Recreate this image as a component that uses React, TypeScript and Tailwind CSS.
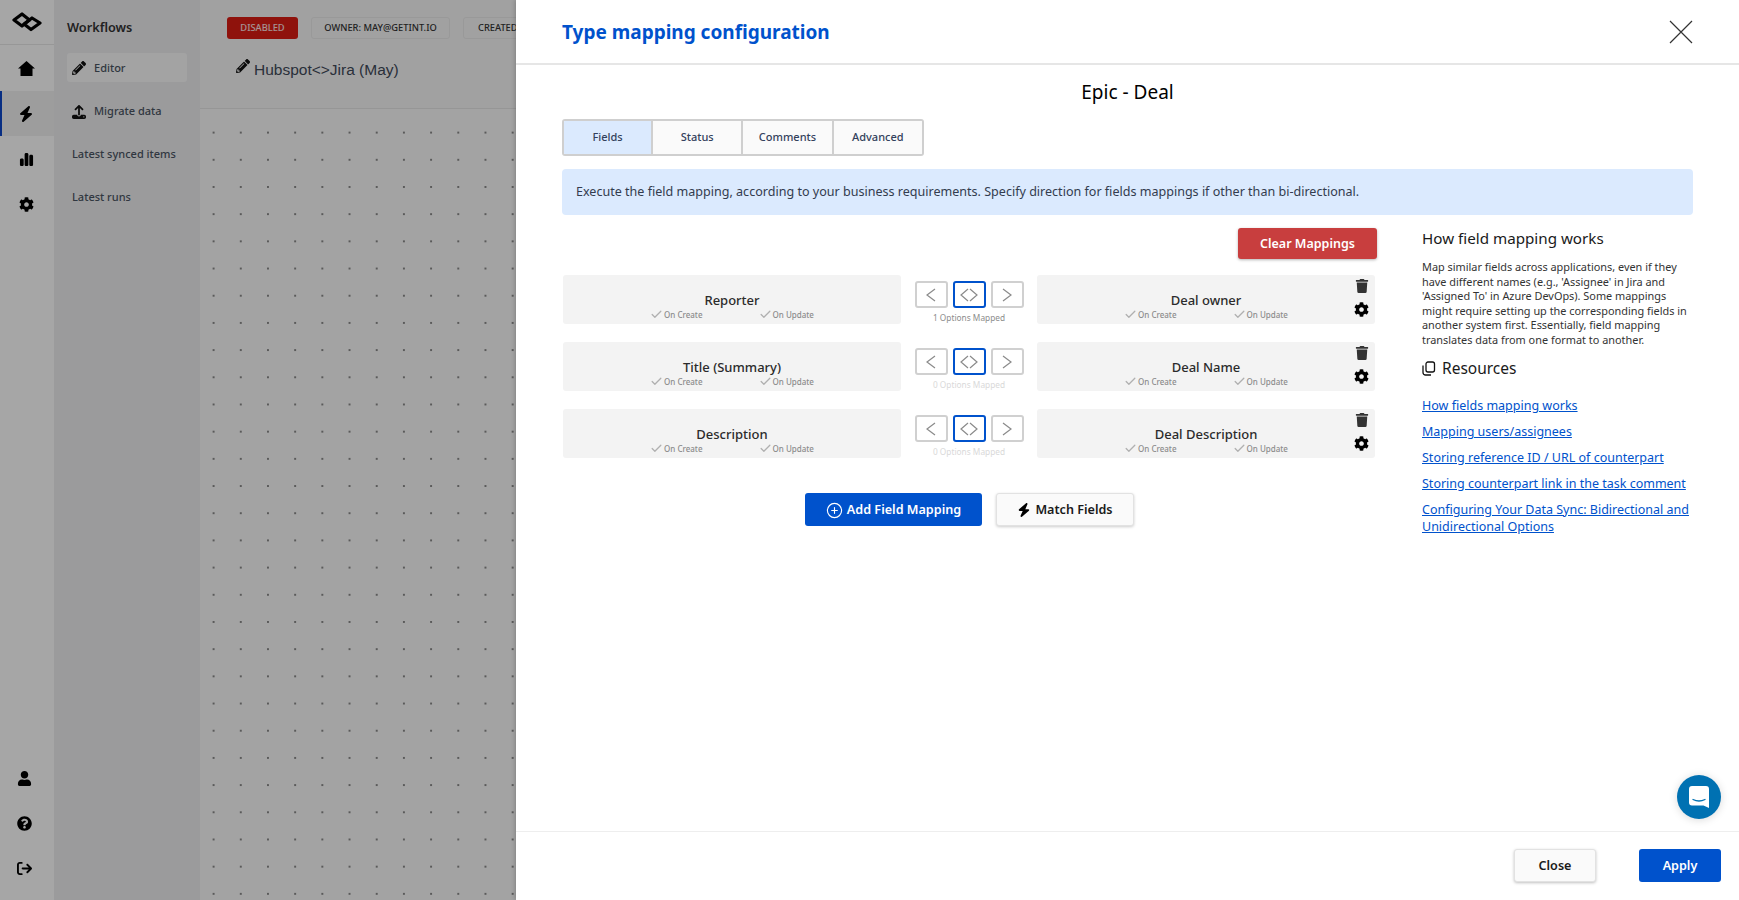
import { FaCog, FaUser, FaQuestionCircle, FaTrash, FaPencilAlt } from 'react-icons/fa';
import { FaBolt, FaChartSimple, FaArrowRightFromBracket, FaUpload } from 'react-icons/fa6';
import { Check, CirclePlus } from 'lucide-react';

const fieldRows = [
  { left: 'Reporter', right: 'Deal owner', options: '1 Options Mapped', muted: false },
  { left: 'Title (Summary)', right: 'Deal Name', options: '0 Options Mapped', muted: true },
  { left: 'Description', right: 'Deal Description', options: '0 Options Mapped', muted: true },
];

const resourceLinks = [
  'How fields mapping works',
  'Mapping users/assignees',
  'Storing reference ID / URL of counterpart',
  'Storing counterpart link in the task comment',
  'Configuring Your Data Sync: Bidirectional and Unidirectional Options',
];

const tabs = ['Fields', 'Status', 'Comments', 'Advanced'];

const Logo = () => (
  <svg width="30" height="20" viewBox="0 0 30 20" fill="none" stroke="#000" strokeWidth="3.2" strokeLinejoin="round">
    <path d="M2 8 L10 2 L17.5 8 L10 14 Z" />
    <path d="M12 12 L20 6 L28 11 L19 17.5 Z" />
  </svg>
);

const HomeIcon = () => (
  <svg width="17" height="15" viewBox="0 0 17 15" fill="#000">
    <path d="M8.5 0 L17 7.5 H14.5 V15 H2.5 V7.5 H0 Z" />
  </svg>
);

const CopyIcon = () => (
  <svg width="14" height="15" viewBox="0 0 14 15" fill="none" stroke="#111" strokeWidth="1.3">
    <rect x="4" y="1" width="8.5" height="10" rx="2" />
    <path d="M1 4.5 V11.5 a2.5 2.5 0 0 0 2.5 2.5 H9" />
  </svg>
);

const CloseIcon = () => (
  <svg width="24" height="24" viewBox="0 0 24 24" fill="none" stroke="#333" strokeWidth="1.2">
    <path d="M1 1 L23 23 M23 1 L1 23" />
  </svg>
);

const ChatIcon = () => (
  <svg width="20" height="22" viewBox="0 0 20 22">
    <path d="M3 0 H17 a3 3 0 0 1 3 3 V22 L14.5 19.5 H3 a3 3 0 0 1 -3 -3 V3 a3 3 0 0 1 3 -3 Z" fill="#fff" />
    <path d="M4 13.5 Q10 16.5 16 13.5" fill="none" stroke="#0071b2" strokeWidth="1.3" strokeLinecap="round" />
  </svg>
);

const LeftArrow = () => (
  <svg width="10" height="14" viewBox="0 0 10 14" fill="none" stroke="#8a8a8a" strokeWidth="1.2">
    <path d="M9 1 L1 7 L9 13" />
  </svg>
);

const RightArrow = () => (
  <svg width="10" height="14" viewBox="0 0 10 14" fill="none" stroke="#8a8a8a" strokeWidth="1.2">
    <path d="M1 1 L9 7 L1 13" />
  </svg>
);

const BothArrows = () => (
  <svg width="18" height="14" viewBox="0 0 18 14" fill="none" stroke="#8a8a8a" strokeWidth="1.2">
    <path d="M8 1 L1 7 L8 13" />
    <path d="M10 1 L17 7 L10 13" />
  </svg>
);

const Syncs = () => (
  <div className="flex justify-center gap-[56px] text-[8px] leading-[12px] font-medium text-[#8c8c8c]">
    <span className="flex items-center gap-[1px]">
      <Check size={13} strokeWidth={2.4} className="text-[#b0b0b0]" />
      On Create
    </span>
    <span className="flex items-center gap-[1px]">
      <Check size={13} strokeWidth={2.4} className="text-[#b0b0b0]" />
      On Update
    </span>
  </div>
);

const FieldCard = ({ name, actions }: { name: string; actions?: boolean }) => (
  <div className="relative h-[49px] w-[338px] rounded-[3px] bg-[#f3f3f3] pt-[15px] text-center">
    <div className="text-[13px] leading-[20px] font-medium text-[#2b2b2b]">{name}</div>
    <div className="-mt-[2px]">
      <Syncs />
    </div>
    {actions && (
      <div className="absolute top-[4px] right-[6px] flex flex-col items-center gap-[9px]">
        <FaTrash size={14} className="text-[#333333]" />
        <FaCog size={15} className="text-black" />
      </div>
    )}
  </div>
);

const DirectionButton = ({ children, active }: { children: React.ReactNode; active?: boolean }) => (
  <div
    className={`flex h-[27px] w-[33px] items-center justify-center rounded-[3px] border-2 bg-white ${
      active ? 'border-[#0052cc]' : 'border-[#d0d0d0]'
    }`}
  >
    {children}
  </div>
);

const App = () => {
  return (
    <div className="relative h-screen w-full overflow-hidden bg-white font-['Noto_Sans',sans-serif]">
      {/* Page behind the drawer */}
      <div className="flex h-full">
        <div className="flex w-[54px] shrink-0 flex-col bg-white">
          <div className="flex h-[45px] items-center justify-center border-b border-[#e8e8e8]">
            <Logo />
          </div>
          <div className="flex h-[46px] items-center justify-center pr-[2px]">
            <HomeIcon />
          </div>
          <div className="flex h-[45px] items-center justify-center border-l-[2px] border-[#0d47c9] bg-[#f2f2f2] pr-[4px]">
            <FaBolt size={16} className="text-black" />
          </div>
          <div className="flex h-[46px] items-center justify-center pr-[2px]">
            <FaChartSimple size={15} className="text-black" />
          </div>
          <div className="flex h-[45px] items-center justify-center pr-[2px]">
            <FaCog size={15} className="text-black" />
          </div>
          <div className="mt-auto flex flex-col items-center gap-[30px] pr-[6px] pb-[24px]">
            <FaUser size={15} className="text-black" />
            <FaQuestionCircle size={15} className="text-black" />
            <FaArrowRightFromBracket size={15} className="text-black" />
          </div>
        </div>

        <div className="w-[146px] shrink-0 bg-[#eeeef0] px-[13px] pt-[17px]">
          <div className="text-[12.7px] leading-[20px] font-semibold text-[#333333]">Workflows</div>
          <div className="mt-[16px] flex h-[29px] items-center gap-[8px] rounded-[3px] bg-[#fafafa] px-[5px] pt-[1px] text-[11px] font-medium text-[#4b5563]">
            <FaPencilAlt size={14} className="text-[#111]" />
            Editor
          </div>
          <div className="mt-[14px] flex h-[29px] items-center gap-[8px] px-[5px] pt-[2px] text-[11px] font-medium text-[#4b5563]">
            <FaUpload size={14} className="text-[#111]" />
            Migrate data
          </div>
          <div className="mt-[14px] flex h-[29px] items-center px-[5px] pt-[2px] text-[11px] font-medium whitespace-nowrap text-[#4b5563]">
            Latest synced items
          </div>
          <div className="mt-[14px] flex h-[29px] items-center px-[5px] pt-[1px] text-[11px] font-medium text-[#4b5563]">
            Latest runs
          </div>
        </div>

        <div className="flex min-w-0 flex-1 flex-col bg-[#fafafa]">
          <div className="h-[109px] shrink-0 border-b border-[#e6e6e6] bg-[#f8f8f8] pt-[17px] pl-[27px]">
            <div className="flex gap-[13px] text-[9.3px] leading-[22px] font-medium">
              <div className="h-[22px] w-[71px] rounded-[3px] bg-[#dc1c13] text-center text-[#fde2e2]">DISABLED</div>
              <div className="h-[22px] w-[139px] rounded-[3px] border border-[#ececec] text-center leading-[20px] text-[#333]">
                OWNER: MAY@GETINT.IO
              </div>
              <div className="h-[22px] w-[120px] shrink-0 rounded-[3px] border border-[#ececec] pl-[14px] leading-[20px] text-[#333]">
                CREATED
              </div>
            </div>
            <div className="mt-[19px] flex items-center gap-[4px] pl-[9px] font-['Liberation_Sans',sans-serif] text-[15.5px] text-[#3f4a5a]">
              <FaPencilAlt size={14} className="-mt-[7px] text-[#111]" />
              Hubspot&lt;&gt;Jira (May)
            </div>
          </div>
          <div className="flex-1 bg-[radial-gradient(circle,#8a8a8a_0.8px,transparent_1px)] bg-[size:27.2px_27.2px] bg-[position:0_10px]" />
        </div>
      </div>

      {/* Dim layer */}
      <div className="absolute inset-0 bg-black/35" />

      {/* Drawer */}
      <div className="absolute top-0 right-0 flex h-full w-[1223px] flex-col bg-white shadow-[-1px_0_4px_rgba(0,0,0,0.2)]">
        <div className="flex h-[65px] shrink-0 items-center justify-between border-b-2 border-[#e6e6e6] pr-[46px] pl-[46px]">
          <div className="pt-[1px] text-[19px] font-bold text-[#0052cc]">Type mapping configuration</div>
          <CloseIcon />
        </div>

        <div className="flex-1 px-[46px]">
          <div className="mt-[15px] text-center text-[19px] leading-[24px] text-black">Epic - Deal</div>

          <div className="mt-[15px] flex h-[37px] w-[362px] overflow-hidden rounded-[3px] border-2 border-[#cfcfcf]">
            {tabs.map((tab, i) => (
              <div
                key={tab}
                className={`flex h-full items-center justify-center border-[#cfcfcf] text-[11px] font-medium text-[#33415c] ${
                  i > 0 ? 'flex-1 border-l-2 bg-[#fafafa]' : 'w-[87px] shrink-0 bg-[#dbeafe]'
                }`}
              >
                {tab}
              </div>
            ))}
          </div>

          <div className="mt-[13px] flex h-[46px] w-[1131px] items-center rounded-[4px] bg-[#dbeafe] px-[14px] pt-[1px] text-[12.55px] text-[#333c4e]">
            Execute the field mapping, according to your business requirements. Specify direction for fields mappings if other than bi-directional.
          </div>

          <div className="mt-[13px] flex">
            <div className="w-[815px] shrink-0">
              <div className="flex justify-end">
                <div className="flex h-[31px] w-[139px] items-center justify-center rounded-[3px] bg-[#c83e3e] pt-[2px] text-[12.5px] font-semibold text-white shadow-[0_1px_3px_rgba(0,0,0,0.3)]">
                  Clear Mappings
                </div>
              </div>
              <div className="mt-[16px] flex flex-col gap-[18px] pl-[1px]">
                {fieldRows.map((row) => (
                  <div key={row.left} className="flex">
                    <FieldCard name={row.left} />
                    <div className="w-[136px] shrink-0 pt-[6px]">
                      <div className="flex justify-center gap-[5px]">
                        <DirectionButton>
                          <LeftArrow />
                        </DirectionButton>
                        <DirectionButton active>
                          <BothArrows />
                        </DirectionButton>
                        <DirectionButton>
                          <RightArrow />
                        </DirectionButton>
                      </div>
                      <div
                        className={`mt-[4px] text-center text-[8.3px] leading-[12px] ${
                          row.muted ? 'text-[#d9d9d9]' : 'text-[#8c8c8c]'
                        }`}
                      >
                        {row.options}
                      </div>
                    </div>
                    <FieldCard name={row.right} actions />
                  </div>
                ))}
              </div>
              <div className="mt-[35px] flex justify-center gap-[14px]">
                <div className="flex h-[33px] w-[177px] items-center justify-center gap-[4px] rounded-[3px] bg-[#0052cc] pt-[1px] text-[12.6px] font-semibold text-white">
                  <CirclePlus size={17} strokeWidth={1.6} />
                  Add Field Mapping
                </div>
                <div className="flex h-[33px] w-[138px] items-center justify-center gap-[4px] rounded-[3px] border border-[#e2e2e2] bg-[#fafafa] pt-[1px] text-[12.6px] font-semibold text-[#1a1a1a] shadow-[0_1px_3px_rgba(0,0,0,0.2)]">
                  <FaBolt size={14} className="text-black" />
                  Match Fields
                </div>
              </div>
            </div>

            <div className="ml-[45px] w-[272px] shrink-0">
              <div className="-mt-[1px] text-[15.2px] leading-[22px] text-[#1a1a1a]">How field mapping works</div>
              <p className="mt-[11px] text-[10.9px] leading-[14.5px] text-[#333333]">
                Map similar fields across applications, even if they have different names (e.g., 'Assignee' in Jira and
                'Assigned To' in Azure DevOps). Some mappings might require setting up the corresponding fields in
                another system first. Essentially, field mapping translates data from one format to another.
              </p>
              <div className="mt-[10px] flex items-center gap-[6px] text-[15.5px] leading-[22px] text-[#1a1a1a]">
                <CopyIcon />
                Resources
              </div>
              <div className="mt-[18px] flex flex-col gap-[9px]">
                {resourceLinks.map((link) => (
                  <a key={link} href="#" className="text-[12.5px] leading-[17px] text-[#0052cc] underline">
                    {link}
                  </a>
                ))}
              </div>
            </div>
          </div>
        </div>

        <div className="flex h-[69px] shrink-0 items-start justify-end gap-[43px] border-t border-[#eeeeee] pt-[17px] pr-[18px]">
          <div className="flex h-[33px] w-[82px] items-center justify-center rounded-[3px] border border-[#e2e2e2] bg-[#fafafa] pt-[2px] text-[12.6px] font-semibold text-[#1a1a1a] shadow-[0_1px_3px_rgba(0,0,0,0.25)]">
            Close
          </div>
          <div className="flex h-[33px] w-[82px] items-center justify-center rounded-[3px] bg-[#0052cc] pt-[2px] text-[12.6px] font-semibold text-white">
            Apply
          </div>
        </div>
      </div>

      {/* Chat launcher */}
      <div className="absolute top-[775px] left-[1677px] flex h-[44px] w-[44px] items-center justify-center rounded-full bg-[#0071b2] shadow-[0_1px_8px_rgba(0,0,0,0.15)]">
        <ChatIcon />
      </div>
    </div>
  );
};

export default App;
